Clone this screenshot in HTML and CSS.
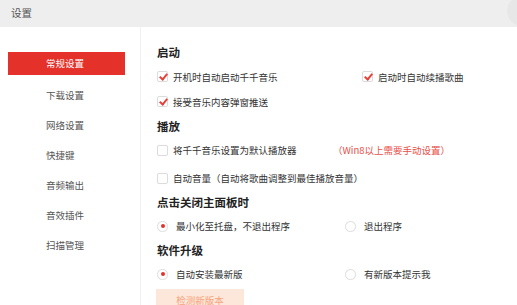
FILE: index.html
```html
<!DOCTYPE html>
<html lang="zh-CN">
<head>
<meta charset="utf-8">
<title>设置</title>
<link rel="stylesheet" href="styles.css">
</head>
<body>
<div class="window">
  <header class="titlebar">
    <span class="title">设置</span>
    <span class="corner"></span>
  </header>
  <div class="main">
    <nav class="sidebar">
      <div class="nav-item active">常规设置</div>
      <div class="nav-item first">下载设置</div>
      <div class="nav-item">网络设置</div>
      <div class="nav-item">快捷键</div>
      <div class="nav-item">音频输出</div>
      <div class="nav-item">音效插件</div>
      <div class="nav-item">扫描管理</div>
    </nav>
    <section class="content">
      <h2 class="heading">启动</h2>
      <div class="row tall">
        <label class="opt col-a"><span class="check on"></span>开机时自动启动千千音乐</label>
        <label class="opt"><span class="check on"></span>启动时自动续播歌曲</label>
      </div>
      <div class="row tall">
        <label class="opt"><span class="check on"></span>接受音乐内容弹窗推送</label>
      </div>

      <h2 class="heading">播放</h2>
      <div class="row">
        <label class="opt col-b"><span class="check"></span>将千千音乐设置为默认播放器</label>
        <span class="warn">（Win8以上需要手动设置）</span>
      </div>
      <div class="row spaced">
        <label class="opt"><span class="check"></span>自动音量（自动将歌曲调整到最佳播放音量）</label>
      </div>

      <h2 class="heading">点击关闭主面板时</h2>
      <div class="row">
        <label class="opt col-c"><span class="radio on"></span>最小化至托盘，不退出程序</label>
        <label class="opt"><span class="radio"></span>退出程序</label>
      </div>

      <h2 class="heading">软件升级</h2>
      <div class="row">
        <label class="opt col-c"><span class="radio on"></span>自动安装最新版</label>
        <label class="opt"><span class="radio"></span>有新版本提示我</label>
      </div>
      <button class="check-btn">检测新版本</button>
    </section>
  </div>
</div>
</body>
</html>
```

FILE: styles.css
```css
* { box-sizing: border-box; }

html, body {
  margin: 0;
  padding: 0;
  background: #ffffff;
}

body {
  font-family: "Noto Sans CJK SC", "Noto Sans", "Liberation Sans", sans-serif;
  color: #333333;
  width: 517px;
  height: 305px;
  overflow: hidden;
}

.window {
  display: flex;
  flex-direction: column;
  height: 305px;
  overflow: hidden;
}

.titlebar {
  position: relative;
  flex: 0 0 27px;
  height: 27px;
  background: #eeeeee;
  padding-left: 11px;
  display: flex;
  align-items: center;
  overflow: hidden;
}

.title {
  font-size: 10.5px;
  color: #555555;
  line-height: 1;
}

.corner {
  position: absolute;
  left: 507px;
  top: -4px;
  width: 30px;
  height: 30px;
  border-radius: 50%;
  background: #e7e7e7;
}

.main {
  flex: 1 0 auto;
  display: flex;
}

.sidebar {
  width: 141px;
  flex-shrink: 0;
  border-right: 1px solid #f0f0f0;
  padding-top: 25px;
  display: flex;
  flex-direction: column;
}

.nav-item {
  flex-shrink: 0;
  height: 30px;
  line-height: 30px;
  padding-left: 46px;
  font-size: 9.5px;
  color: #555555;
}

.nav-item.active {
  height: 23px;
  line-height: 23px;
  width: 117px;
  margin-left: 8px;
  padding-left: 38px;
  background: #e4322b;
  color: #ffffff;
}

.nav-item.first {
  margin-top: 5px;
}

.content {
  flex: 1;
  padding: 13px 0 0 16px;
  display: flex;
  flex-direction: column;
  align-items: flex-start;
}

.heading {
  flex-shrink: 0;
  margin: 0;
  height: 24px;
  line-height: 24px;
  font-size: 11.5px;
  font-weight: bold;
  color: #222222;
}

.row {
  flex-shrink: 0;
  height: 24px;
  display: flex;
  align-items: center;
  font-size: 9.5px;
  width: 100%;
}

.row.tall { height: 25px; }
.row.spaced { margin-top: 4px; }

.opt {
  display: flex;
  align-items: center;
  white-space: nowrap;
}

.col-a { width: 205px; }
.col-b { width: 176px; }
.col-c { width: 188px; }

.check {
  width: 11px;
  height: 11px;
  border: 1px solid #dcdcdc;
  border-radius: 2px;
  background: #fff;
  margin-right: 5px;
  position: relative;
  box-shadow: 0 0 1px rgba(0,0,0,0.05);
}

.check.on::after {
  content: "";
  position: absolute;
  left: 3px;
  top: 0px;
  width: 3px;
  height: 6px;
  border-right: 2px solid #e8403a;
  border-bottom: 2px solid #e8403a;
  transform: rotate(40deg);
}

.radio {
  width: 11px;
  height: 11px;
  border: 1px solid #e0e0e0;
  border-radius: 50%;
  background: #fff;
  margin-right: 8px;
  position: relative;
  box-shadow: 0 0 1px rgba(0,0,0,0.08);
}

.radio.on::after {
  content: "";
  position: absolute;
  left: 2.5px;
  top: 2.5px;
  width: 4px;
  height: 4px;
  border-radius: 50%;
  background: #e4322b;
}

.warn {
  color: #e9504a;
  white-space: nowrap;
}

.check-btn {
  flex-shrink: 0;
  margin-top: 3px;
  margin-left: -1px;
  width: 88px;
  height: 22px;
  border: none;
  background: #fde7da;
  color: #f5a47e;
  font-family: inherit;
  font-size: 9.5px;
  padding: 0;
}
```
